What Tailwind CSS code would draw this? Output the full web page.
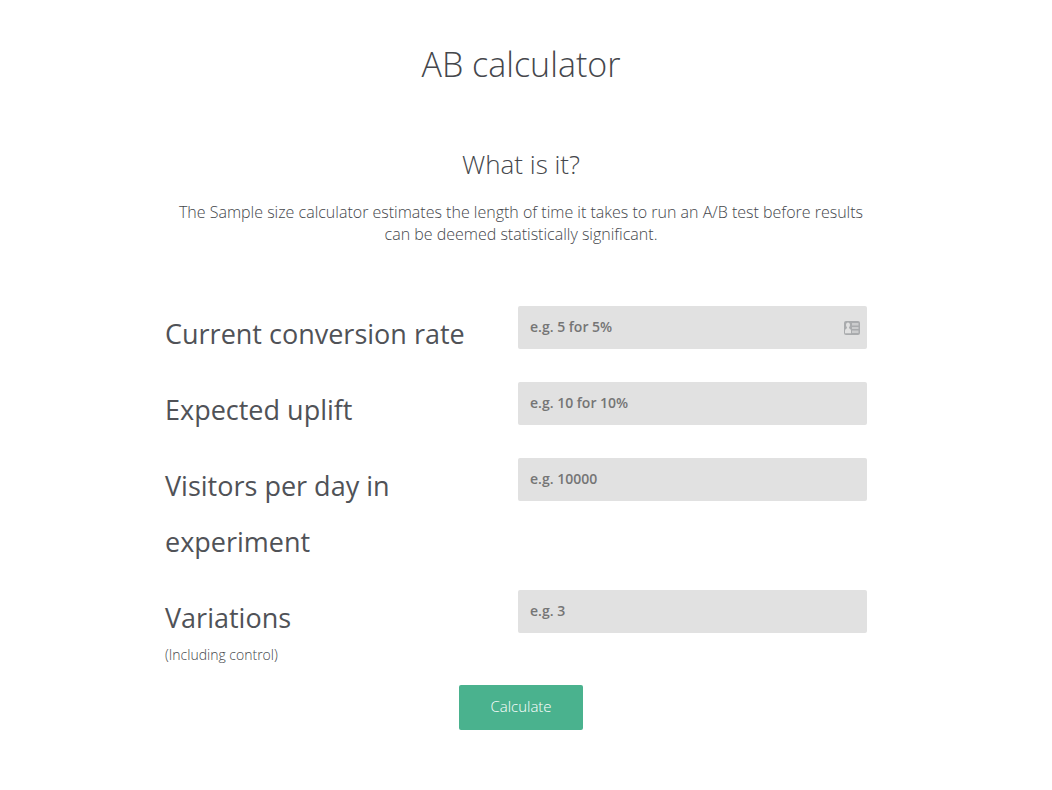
<!DOCTYPE html>
<html lang="en">
<head>
    <meta charset="UTF-8">
    <meta name="viewport" content="width=device-width, initial-scale=1.0">
    <title>AB calculator</title>
    <script src="https://cdn.jsdelivr.net/npm/@tailwindcss/browser@4"></script>
</head>
<body class="bg-white pr-[10px] font-['Open_Sans',sans-serif] text-[#45474c]">
    <main class="mx-auto max-w-[712px] pt-10 pb-10">
        <h1 class="text-center text-[34px] leading-[48px] font-light">AB calculator</h1>

        <section class="mt-[60px] text-center">
            <h2 class="text-[26px] leading-[32px] font-light">What is it?</h2>
            <p class="mt-[21px] text-[16px] leading-[22px] font-light">The Sample size calculator estimates the length of time it takes to run an A/B test before results can be deemed statistically significant.</p>
        </section>

        <form class="mt-[61px]">
            <div class="flex flex-col gap-5 pr-[10px]">
                <div class="grid grid-cols-2 items-start gap-1">
                    <label for="rate" class="text-[27px] leading-[56px] text-[#505257]">Current conversion rate</label>
                    <div class="relative">
                        <input type="text" id="rate" placeholder="e.g. 5 for 5%" class="block h-[43px] w-full rounded-xs bg-[#e1e1e1] pr-8 pb-[2px] pl-3 text-[14px] font-semibold placeholder:text-[#757575]">
                        <!-- contact card autofill icon -->
                        <svg class="absolute top-[15px] right-[7px]" width="16" height="14" viewBox="0 0 16 14">
                            <rect width="16" height="14" rx="2" fill="#a9abad"></rect>
                            <path d="M4 1.5c1.2 0 2 1 2 2.500 0 1-.4 1.800-.9 2.300v1c1 .5 1.900 1.200 1.900 2.500v2.500H1V9.800c0-1.300.9-2 1.900-2.500v-1C2.400 5.800 2 5 2 4c0-1.500.8-2.500 2-2.500z" fill="#e1e1e1"></path>
                            <path d="M8 2h6.500v2.500H8zM8 6h6.500v2H8zM8 9.500h6.500V12H8z" fill="#cbcccd"></path>
                        </svg>
                    </div>
                </div>
                <div class="grid grid-cols-2 items-start gap-1">
                    <label for="uplift" class="text-[27px] leading-[56px] text-[#505257]">Expected uplift</label>
                    <input type="text" id="uplift" placeholder="e.g. 10 for 10%" class="block h-[43px] w-full rounded-xs bg-[#e1e1e1] px-3 pb-[2px] text-[14px] font-semibold placeholder:text-[#757575]">
                </div>
                <div class="grid grid-cols-2 items-start gap-1">
                    <label for="visitors" class="pr-12 text-[27px] leading-[56px] text-[#505257]">Visitors per day in experiment</label>
                    <input type="text" id="visitors" placeholder="e.g. 10000" class="block h-[43px] w-full rounded-xs bg-[#e1e1e1] px-3 pb-[2px] text-[14px] font-semibold placeholder:text-[#757575]">
                </div>
                <div class="grid grid-cols-2 items-start gap-1">
                    <label for="variations" class="text-[27px] leading-[56px] text-[#505257]">Variations
                        <span class="block text-[14px] leading-[18px] font-light text-[#45474c]">(Including control)</span>
                    </label>
                    <input type="text" id="variations" placeholder="e.g. 3" class="block h-[43px] w-full rounded-xs bg-[#e1e1e1] px-3 pb-[2px] text-[14px] font-semibold placeholder:text-[#757575]">
                </div>
            </div>
            <button type="button" class="mx-auto mt-[21px] block h-[45px] w-[124px] rounded-xs bg-[#4ab28e] pb-[2px] text-[15px] font-light text-white">Calculate</button>
        </form>
    </main>
</body>
</html>
